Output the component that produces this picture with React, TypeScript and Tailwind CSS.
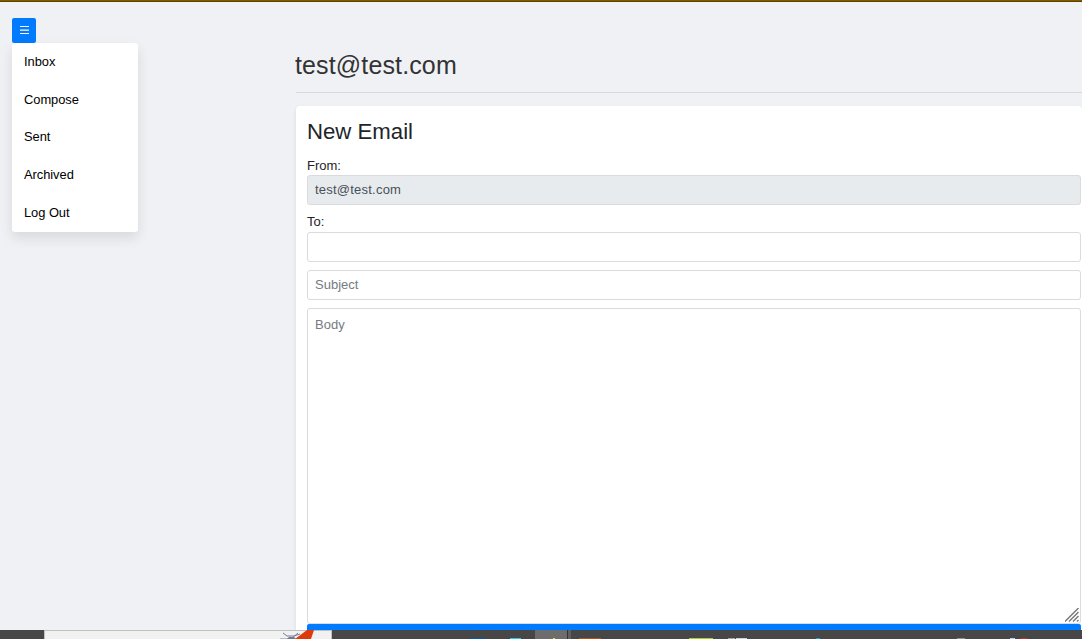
import React from "react";

const menuItems = ["Inbox", "Compose", "Sent", "Archived", "Log Out"];

function Menu() {
  return (
    <aside className="w-[126px] shrink-0 pt-4">
      <button aria-label="Menu" className="flex h-[25px] w-6 items-center justify-center rounded-[2px] bg-[#007bff] pb-px">
        <svg width="10" height="10" viewBox="0 0 10 10" shapeRendering="crispEdges">
          <path d="M1 1h9v1H1zM1 8h9v1H1z" fill="#fff" />
          <path d="M1 4h9v1H1z" fill="#fff" fillOpacity=".5" />
          <path d="M1 5h9v1H1z" fill="#fff" fillOpacity=".75" />
        </svg>
      </button>
      <nav className="flex h-[189px] flex-col rounded-[3px] bg-white text-[12.9px] text-black shadow-[0_6px_13px_rgba(0,0,0,0.1)]">
        {menuItems.map((item) => (
          <a key={item} className="flex h-[37.6px] items-center pl-3 leading-[19px] tracking-[-0.05px]">
            {item}
          </a>
        ))}
      </nav>
    </aside>
  );
}

function ComposeForm() {
  return (
    <main className="ml-[158px] flex w-[786px] shrink-0 flex-col">
      <h1 className="mt-12 -ml-px h-[31px] text-[25px] leading-[30px] tracking-[0.13px] text-[#333]">test@test.com</h1>
      <hr className="mt-[11px] border-[#d7d9dd]" />
      <section className="mt-[13px] h-[524px] rounded-t-[4px] bg-white pr-px pl-[11px] text-[13px] text-[#212529] shadow-[0_2px_4px_rgba(0,0,0,0.09)]">
        <h2 className="pt-3 text-[22.2px] leading-7">New Email</h2>
        <label className="mt-[10px] block h-[19px] leading-[19px]">From:</label>
        <input
          readOnly
          value="test@test.com"
          className="block h-[30px] w-[774px] rounded-[3px] border border-[#d9dbdd] bg-[#e7ebee] px-[7px] pb-[2px] tracking-[0.22px] text-[#495057] outline-none"
        />
        <label className="mt-[7px] block h-5 leading-[19px]">To:</label>
        <input className="block h-[30px] w-[774px] rounded-[3px] border border-[#d9dbdd] bg-white px-[7px] outline-none" />
        <input
          placeholder="Subject"
          className="mt-2 block h-[30px] w-[774px] rounded-[3px] border border-[#d9dbdd] bg-white px-[7px] pb-[2px] outline-none placeholder:text-[#747b82]"
        />
        <div className="mt-2 grid h-[316px] w-[774px]">
          <textarea
            placeholder="Body"
            className="col-start-1 row-start-1 block h-full w-full resize-none rounded-[3px] border border-[#d9dbdd] bg-white px-[7px] py-[6px] leading-[19px] outline-none placeholder:text-[#747b82]"
          />
          <svg className="pointer-events-none col-start-1 row-start-1 mr-[2px] mb-[2px] self-end justify-self-end" width="14" height="14" viewBox="0 0 14 14">
            <path d="M0 13.5L13.5 0M4 13.5L13.5 4M8 13.5L13.5 8M12 13.5L13.5 12" stroke="#777" strokeWidth="1.4" fill="none" />
          </svg>
        </div>
        <button aria-label="Send" className="block h-[6px] w-[774px] rounded-t-[2px] bg-[#007bff]" />
      </section>
    </main>
  );
}

function Taskbar() {
  return (
    <footer className="flex h-[9px] bg-[#474747]">
      <div className="ml-11 flex w-72 justify-end border-t border-r border-l border-[#bfc1bd] bg-[#f1f1f1]">
        <svg className="-mt-px mr-[13px]" width="40" height="9" viewBox="0 0 40 9">
          <path d="M5 3l4 3h7l6-2M13 9l7-6" stroke="#777b92" fill="none" />
          <path d="M2 8.5h20" stroke="#b8bac4" />
          <path d="M9 9l2-2h5l2 2z" fill="#72768f" />
          <path d="M17 9l12-9h7l-3 9z" fill="#df3b08" />
        </svg>
      </div>
      <svg width="750" height="9" viewBox="332 0 750 9" shapeRendering="crispEdges">
        <path d="M535 0h32v9h-32z" fill="#6d6d6d" />
        <path d="M567 0h1v9h-1z" fill="#333" />
        <path d="M568 0h3v9h-3z" fill="#606060" />
        <path d="M470 8h15v1h-15z" fill="#0b57a3" />
        <path d="M510 8h11v1h-11z" fill="#29c8dc" />
        <path d="M553 8h2v1h-2z" fill="#e7df32" />
        <path d="M579 8h22v1h-22z" fill="#b95112" />
        <path d="M689 8h24v1h-24z" fill="#a7cf24" />
        <path d="M728 8h7v1h-7z" fill="#a6a6a6" />
        <path d="M736 8h11v1h-11z" fill="#cbd3da" />
        <path d="M816 8h4v1h-4z" fill="#159fd3" />
        <path d="M957 8h8v1h-8z" fill="#929292" />
        <path d="M1010 8h5v1h-5z" fill="#b8c9ff" />
        <path d="M1021 8h6v1h-6z" fill="#c83228" />
      </svg>
    </footer>
  );
}

export default function App() {
  return (
    <div className="flex h-[639px] w-[1082px] flex-col overflow-hidden bg-[#f0f1f5] font-['Liberation_Sans',Arial,sans-serif]">
      <div className="h-[2px] shrink-0 border-b border-[#5d4200] bg-[#805900]" />
      <div className="flex h-[628px] shrink-0 overflow-hidden pl-3">
        <Menu />
        <ComposeForm />
      </div>
      <Taskbar />
    </div>
  );
}
